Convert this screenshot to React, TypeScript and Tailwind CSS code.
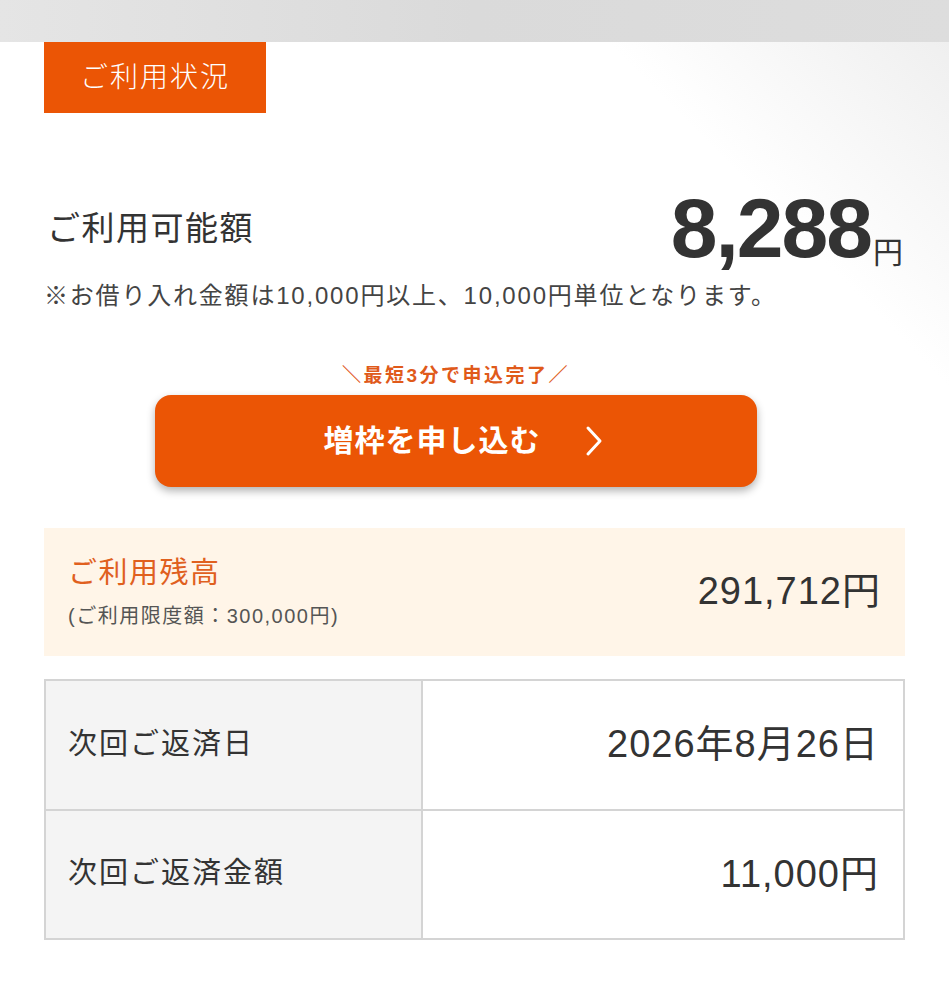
import React from 'react';

const font = { fontFamily: '"Liberation Sans", "Noto Sans CJK JP", sans-serif' };

export default function App() {
  return (
    <div className="min-h-[999px] w-[949px] bg-white text-[#333]" style={font}>
      {/* top bar */}
      <div className="h-[42px] bg-gradient-to-r from-[#e5e5e5] via-[#dadada] to-[#dddddd]" />

      <div className="bg-gradient-to-bl from-[#efefef] via-white via-[18%] to-white px-[44px] pb-[60px]">
        {/* tab */}
        <div className="flex h-[71px] w-[222px] items-center justify-center bg-[#eb5505] text-[28px] font-light tracking-[2px] text-white">
          ご利用状況
        </div>

        {/* available amount */}
        <div className="mt-[73px] flex items-end justify-between pl-[3px]">
          <div className="mb-[17px] text-[33px] tracking-[1.5px]">ご利用可能額</div>
          <div className="flex items-end pr-[2px]">
            <span className="text-[84px] font-bold leading-[84px] tracking-[-2px] text-[#333]">8,288</span>
            <span className="mb-[2px] ml-[2px] text-[30px] leading-none">円</span>
          </div>
        </div>
        <div className="mt-[9px] text-[24px] leading-[34px] tracking-[1.8px] text-[#444]">※お借り入れ金額は10,000円以上、10,000円単位となります。</div>

        {/* apply */}
        <div className="ml-[111px] mt-[49px] flex w-[602px] flex-col items-center">
          <div className="text-[19px] font-bold tracking-[2.5px] text-[#e05a1a]">＼最短3分で申込完了／</div>
          <button className="mt-[4px] flex h-[92px] w-[602px] items-center justify-center rounded-[16px] bg-[#eb5505] pl-[14px] text-white shadow-[0_4px_8px_rgba(0,0,0,0.3)]">
            <span className="text-[30px] font-bold tracking-[1px]">増枠を申し込む</span>
            <svg width="18" height="32" viewBox="0 0 18 32" className="ml-[44px]" fill="none" stroke="currentColor" strokeWidth="3" strokeLinecap="round" strokeLinejoin="round">
              <polyline points="3,3 15,16 3,29" />
            </svg>
          </button>
        </div>

        {/* balance */}
        <div className="mt-[41px] flex h-[128px] items-center justify-between bg-[#fff5e8] pl-[24px] pr-[24px]">
          <div>
            <div className="text-[29px] tracking-[1.5px] text-[#e0601e]">ご利用残高</div>
            <div className="mt-[6px] text-[20px] tracking-[1.5px] text-[#555]">(ご利用限度額：300,000円)</div>
          </div>
          <div className="text-[38px] tracking-[1px]">291,712円</div>
        </div>

        {/* schedule table */}
        <div className="mt-[23px] border-2 border-[#d4d4d4]">
          <div className="flex h-[128px]">
            <div className="flex w-[377px] items-center border-r-2 border-[#d4d4d4] bg-[#f4f4f4] pl-[22px] text-[29px] tracking-[2px]">次回ご返済日</div>
            <div className="flex flex-1 items-center justify-end pr-[24px] text-[38px] tracking-[1px]">2026年8月26日</div>
          </div>
          <div className="flex h-[129px] border-t-2 border-[#d4d4d4]">
            <div className="flex w-[377px] items-center border-r-2 border-[#d4d4d4] bg-[#f4f4f4] pl-[22px] text-[29px] tracking-[2px]">次回ご返済金額</div>
            <div className="flex flex-1 items-center justify-end pr-[24px] text-[38px] tracking-[1px]">11,000円</div>
          </div>
        </div>
      </div>
    </div>
  );
}
